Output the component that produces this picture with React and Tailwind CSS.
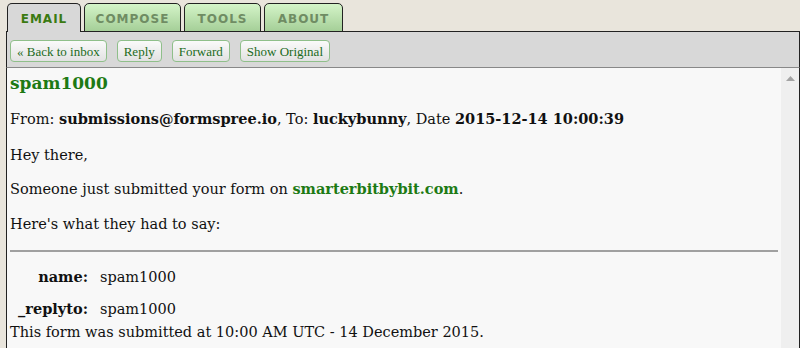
import React from 'react'

const serif = { fontFamily: '"DejaVu Serif", Georgia, serif' }
const btnSerif = { fontFamily: '"Liberation Serif", Georgia, serif' }

const tabs = [
  { label: 'EMAIL', active: true, w: 'w-[74px]' },
  { label: 'COMPOSE', w: 'w-[97px]' },
  { label: 'TOOLS', w: 'w-[77px]' },
  { label: 'ABOUT', w: 'w-[79px]' },
]

const buttons = ['« Back to inbox', 'Reply', 'Forward', 'Show Original']

const App = () => {
  return (
    <div className="w-[800px] h-[348px] overflow-hidden bg-[#e9e5dc] pl-[6px] pt-[3px]" style={serif}>
      {/* Tabs */}
      <div className="flex gap-[3px] pl-[1px] h-[28px] relative z-10">
        {tabs.map((t) => (
          <div
            key={t.label}
            className={`${t.w} h-[29px] rounded-t-[5px] border border-[#222] flex items-center justify-center pt-[2px] text-[12px] font-bold tracking-[1px] ${
              t.active
                ? 'bg-[#d8d8d8] text-[#3b7a12] border-b-0'
                : 'bg-gradient-to-b from-[#d4f4c8] to-[#a5cf98] text-[#6f8c63] h-[28px]'
            }`}
            style={{ fontFamily: '"DejaVu Sans", Verdana, sans-serif' }}
          >
            {t.label}
          </div>
        ))}
      </div>

      {/* Toolbar */}
      <div className="h-[37px] bg-[#d8d8d8] border-t border-r border-l border-[#222] border-b border-b-[#888] flex items-center gap-[10px] pl-[3px] pt-[3px]">
        {buttons.map((b) => (
          <button
            key={b}
            className="h-[22px] px-[6px] rounded-[4px] border border-[#8fbf8a] bg-gradient-to-b from-[#fafafa] to-[#e2e2e2] text-[#1c6b1c] text-[13px] leading-none"
            style={btnSerif}
          >
            {b}
          </button>
        ))}
      </div>

      {/* Content */}
      <div className="flex h-[300px] border-l border-r border-[#222] bg-[#f8f8f8]">
        <div className="flex-1 pl-[3px] pr-[3px] text-[14.5px] leading-[20px] text-[#111]">
          <div className="text-[#1d7a14] font-bold text-[17px] leading-none mt-[7px]">spam1000</div>
          <p className="mt-[17px]">
            From: <b>submissions@formspree.io</b>, To: <b>luckybunny</b>, Date <b>2015-12-14 10:00:39</b>
          </p>
          <p className="mt-[16px]">Hey there,</p>
          <p className="mt-[14px]">
            Someone just submitted your form on <b className="text-[#1d7a14]">smarterbitbybit.com</b>.
          </p>
          <p className="mt-[15px]">Here's what they had to say:</p>
          <hr className="mt-[16px] border-t-[2px] border-[#a0a0a0] border-b-0" />
          <div className="grid grid-cols-[78px_1fr] gap-x-[12px] mt-[15px]">
            <b className="text-right">name:</b>
            <span>spam1000</span>
            <b className="text-right mt-[12px]">_replyto:</b>
            <span className="mt-[12px]">spam1000</span>
          </div>
          <p className="mt-[3px]">This form was submitted at 10:00 AM UTC - 14 December 2015.</p>
        </div>
        <div className="w-[18px] bg-[#efefef] flex justify-center pt-[8px]">
          <svg width="9" height="5" viewBox="0 0 9 5">
            <path d="M4.5 0 L9 5 L0 5 Z" fill="#a3a3a3" />
          </svg>
        </div>
      </div>
    </div>
  )
}

export default App
